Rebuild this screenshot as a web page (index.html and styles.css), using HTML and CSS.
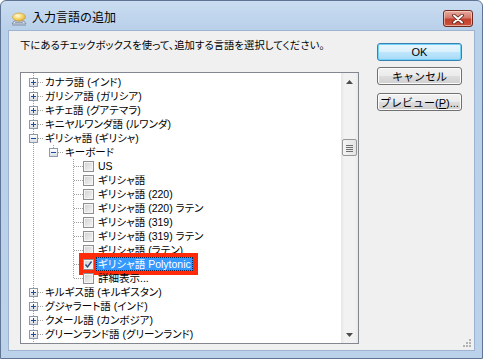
FILE: index.html
```html
<!DOCTYPE html>
<html lang="ja">
<head>
    <meta charset="UTF-8">
    <title>入力言語の追加</title>
    <link rel="stylesheet" href="styles.css">
</head>
<body>

    <!-- Dialog window -->
    <div class="window">

        <!-- Title bar -->
        <div class="titlebar">
            <svg class="app-icon" width="16" height="16" viewBox="0 0 16 16">
                <defs>
                    <radialGradient id="cloud" cx="0.4" cy="0.35" r="0.7">
                        <stop offset="0" stop-color="#fffbe0"/>
                        <stop offset="0.5" stop-color="#f7d873"/>
                        <stop offset="1" stop-color="#d9a936"/>
                    </radialGradient>
                </defs>
                <path d="M1 13 L3 10 L13 10 L15 13 Z" fill="#dfe6ef" stroke="#6b7f99" stroke-width="0.8"/>
                <path d="M4 11.5 H12" stroke="#8193ab" stroke-width="0.8"/>
                <rect x="1" y="13" width="14" height="2" fill="#9fb0c6"/>
                <ellipse cx="8" cy="6" rx="6.5" ry="4" fill="url(#cloud)" stroke="#c99a2e" stroke-width="0.6"/>
            </svg>
            <span class="title">入力言語の追加</span>
            <button class="close" type="button" aria-label="閉じる">
                <svg width="14" height="10" viewBox="0 0 14 10">
                    <path d="M3 1.5 L11 8.5 M11 1.5 L3 8.5" stroke="#5a1f18" stroke-width="3.6" stroke-linecap="round"/>
                    <path d="M3 1.5 L11 8.5 M11 1.5 L3 8.5" stroke="#fff" stroke-width="2" stroke-linecap="round"/>
                </svg>
            </button>
        </div>

        <!-- Client area -->
        <div class="client">
            <div class="main">
                <p class="hint">下にあるチェックボックスを使って、追加する言語を選択してください。</p>

                <div class="listbox">
                    <div class="tree">
                        <div class="row"><span class="cell h"><span class="box plus"></span></span><span class="label">カナラ語 (インド)</span></div>
                        <div class="row"><span class="cell h"><span class="box plus"></span></span><span class="label">ガリシア語 (ガリシア)</span></div>
                        <div class="row"><span class="cell h"><span class="box plus"></span></span><span class="label">キチェ語 (グアテマラ)</span></div>
                        <div class="row"><span class="cell h"><span class="box plus"></span></span><span class="label">キニヤルワンダ語 (ルワンダ)</span></div>
                        <div class="row"><span class="cell h"><span class="box minus"></span></span><span class="label">ギリシャ語 (ギリシャ)</span></div>
                        <div class="row"><span class="cell"></span><span class="cell h v-half"><span class="box minus"></span></span><span class="label">キーボード</span></div>
                        <div class="row"><span class="cell"></span><span class="cell"></span><span class="cell h v-full"></span><span class="check"></span><span class="label">US</span></div>
                        <div class="row"><span class="cell"></span><span class="cell"></span><span class="cell h v-full"></span><span class="check"></span><span class="label">ギリシャ語</span></div>
                        <div class="row"><span class="cell"></span><span class="cell"></span><span class="cell h v-full"></span><span class="check"></span><span class="label">ギリシャ語 (220)</span></div>
                        <div class="row"><span class="cell"></span><span class="cell"></span><span class="cell h v-full"></span><span class="check"></span><span class="label">ギリシャ語 (220) ラテン</span></div>
                        <div class="row"><span class="cell"></span><span class="cell"></span><span class="cell h v-full"></span><span class="check"></span><span class="label">ギリシャ語 (319)</span></div>
                        <div class="row"><span class="cell"></span><span class="cell"></span><span class="cell h v-full"></span><span class="check"></span><span class="label">ギリシャ語 (319) ラテン</span></div>
                        <div class="row"><span class="cell"></span><span class="cell"></span><span class="cell h v-full"></span><span class="check"></span><span class="label">ギリシャ語 (ラテン)</span></div>
                        <div class="row">
                            <span class="cell"></span><span class="cell"></span><span class="cell h v-full"></span>
                            <span class="marked">
                                <span class="check checked">
                                    <svg width="9" height="9" viewBox="0 0 9 9"><path d="M1.5 4.5 L3.5 7 L7.5 1.5" fill="none" stroke="#2b4476" stroke-width="1.3"/></svg>
                                </span>
                                <span class="label selected">ギリシャ語 Polytonic</span>
                            </span>
                        </div>
                        <div class="row"><span class="cell"></span><span class="cell"></span><span class="cell h v-half"></span><span class="check"></span><span class="label">詳細表示...</span></div>
                        <div class="row"><span class="cell h"><span class="box plus"></span></span><span class="label">キルギス語 (キルギスタン)</span></div>
                        <div class="row"><span class="cell h"><span class="box plus"></span></span><span class="label">グジャラート語 (インド)</span></div>
                        <div class="row"><span class="cell h"><span class="box plus"></span></span><span class="label">クメール語 (カンボジア)</span></div>
                        <div class="row"><span class="cell h"><span class="box plus"></span></span><span class="label">グリーンランド語 (グリーンランド)</span></div>
                        <div class="row"><span class="cell h"><span class="box plus"></span></span><span class="label">クロアチア語 (クロアチア)</span></div>
                    </div>

                    <!-- Vertical scrollbar -->
                    <div class="scrollbar">
                        <div class="arrow">
                            <svg width="7" height="4" viewBox="0 0 7 4"><path d="M0 4 L3.5 0 L7 4 Z" fill="#4d4d4d"/></svg>
                        </div>
                        <div class="track">
                            <div class="thumb">
                                <svg width="7" height="8" viewBox="0 0 7 8">
                                    <path d="M0 1.5 H7 M0 3.5 H7 M0 5.5 H7 M0 7.5 H7" stroke="#6e6e6e" stroke-width="1"/>
                                </svg>
                            </div>
                        </div>
                        <div class="arrow">
                            <svg width="7" height="4" viewBox="0 0 7 4"><path d="M0 0 L7 0 L3.5 4 Z" fill="#4d4d4d"/></svg>
                        </div>
                    </div>
                </div>
            </div>

            <!-- Dialog buttons -->
            <div class="buttons">
                <button class="btn default" type="button">OK</button>
                <button class="btn" type="button">キャンセル</button>
                <button class="btn preview" type="button">プレビュー(<u>P</u>)...</button>
            </div>

            <svg class="grip" width="8" height="8" viewBox="0 0 8 8">
                <rect x="6" y="0" width="2" height="2" fill="#b3b3b3"/>
                <rect x="3" y="3" width="2" height="2" fill="#b3b3b3"/>
                <rect x="6" y="3" width="2" height="2" fill="#b3b3b3"/>
                <rect x="0" y="6" width="2" height="2" fill="#b3b3b3"/>
                <rect x="3" y="6" width="2" height="2" fill="#b3b3b3"/>
                <rect x="6" y="6" width="2" height="2" fill="#b3b3b3"/>
            </svg>
        </div>

    </div>

</body>
</html>
```

FILE: styles.css
```css
/* General styling */
* {
    margin: 0;
    padding: 0;
    box-sizing: border-box;
}

body {
    font-family: "Liberation Sans", "Noto Sans CJK JP", sans-serif;
    font-size: 10.5px;
    color: #000;
    background: #fff;
}

/* Window frame */
.window {
    width: 483px;
    height: 359px;
    display: flex;
    flex-direction: column;
    border: 1px solid #5f7593;
    border-radius: 6px 6px 0 0;
    background: linear-gradient(to bottom, #c9dcf1 0, #b9d0ea 30px, #bcd2eb 100%);
}

/* Title bar */
.titlebar {
    height: 29px;
    display: flex;
    align-items: flex-start;
    padding-left: 10px;
}

.app-icon {
    margin-top: 10px;
}

.title {
    font-family: "Noto Sans CJK JP", sans-serif;
    font-size: 12px;
    line-height: 14px;
    margin: 9px 0 0 5px;
    flex: 1;
}

.close {
    width: 30px;
    height: 17px;
    margin: 9px 9px 0 0;
    border: 1px solid #6d2b22;
    border-radius: 3px;
    background: linear-gradient(to bottom, #e9aa9e 0, #d47a6c 45%, #c4402c 55%, #c8543f 100%);
    box-shadow: inset 0 0 0 1px rgba(255, 220, 210, 0.6);
    display: flex;
    align-items: center;
    justify-content: center;
}

/* Client area */
.client {
    position: relative;
    flex: 1;
    margin: 0 7px 7px 7px;
    background-color: #f0f0f0;
    border: 1px solid #9db3cf;
    display: flex;
    padding: 8px 0 0 11px;
}

.main {
    width: 339px;
}

.hint {
    font-size: 10.3px;
    font-feature-settings: "palt";
    line-height: 13px;
    height: 13px;
    margin-bottom: 20px;
    letter-spacing: 0.1px;
}

/* List box */
.listbox {
    height: 272px;
    border: 1px solid #828790;
    background-color: #fff;
    display: flex;
    overflow: hidden;
}

.tree {
    flex: 1;
    padding-top: 2px;
    overflow: hidden;
    background-image: repeating-linear-gradient(to bottom, #a0a0a0 0 1px, transparent 1px 2px);
    background-size: 1px 100%;
    background-position: 12px 0;
    background-repeat: no-repeat;
}

.row {
    height: 14px;
    display: flex;
    align-items: center;
    padding-left: 2px;
    white-space: nowrap;
    font-feature-settings: "palt";
}

.cell {
    width: 20px;
    height: 14px;
    flex-shrink: 0;
    display: flex;
    align-items: center;
    background-repeat: no-repeat;
}

.cell.h {
    background-image: repeating-linear-gradient(to right, #a0a0a0 0 1px, transparent 1px 2px);
    background-size: 9px 1px;
    background-position: 11px 7px;
}

.cell.h.v-full {
    background-image:
        repeating-linear-gradient(to right, #a0a0a0 0 1px, transparent 1px 2px),
        repeating-linear-gradient(to bottom, #a0a0a0 0 1px, transparent 1px 2px);
    background-size: 9px 1px, 1px 14px;
    background-position: 11px 7px, 10px 0;
}

.cell.h.v-half {
    background-image:
        repeating-linear-gradient(to right, #a0a0a0 0 1px, transparent 1px 2px),
        repeating-linear-gradient(to bottom, #a0a0a0 0 1px, transparent 1px 2px);
    background-size: 9px 1px, 1px 7px;
    background-position: 11px 7px, 10px 0;
}

/* Expand / collapse boxes */
.box {
    width: 9px;
    height: 9px;
    margin-left: 6px;
    border: 1px solid #8e9aa8;
    background-repeat: no-repeat;
}

.box.plus {
    background-image:
        linear-gradient(#1c4e9c, #1c4e9c),
        linear-gradient(#1c4e9c, #1c4e9c),
        linear-gradient(to bottom, #ffffff, #d9dee6);
    background-size: 5px 1px, 1px 5px, 100% 100%;
    background-position: center, center, 0 0;
}

.box.minus {
    background-image:
        linear-gradient(#1c4e9c, #1c4e9c),
        linear-gradient(to bottom, #ffffff, #d9dee6);
    background-size: 5px 1px, 100% 100%;
    background-position: center, 0 0;
}

/* Check boxes */
.check {
    width: 11px;
    height: 11px;
    flex-shrink: 0;
    border: 1px solid #8f8f8f;
    background: linear-gradient(135deg, #cfcfcf, #f7f7f7);
    box-shadow: inset 0 0 0 1px #f4f4f4;
    display: flex;
    align-items: center;
    justify-content: center;
}

.label {
    padding: 0 2px;
    line-height: 14px;
}

.check + .label {
    margin-left: 2px;
}

.selected {
    background-color: #3399ff;
    color: #fff;
    outline: 1px dotted #0a2a5a;
    outline-offset: -1px;
}

/* Red annotation frame */
.marked {
    display: flex;
    align-items: center;
    height: 14px;
    background-color: #ff2a0a;
    box-shadow: 0 0 0 4px #ff2a0a;
    padding-right: 1px;
}

.marked .label {
    margin-left: 2px;
}

/* Scrollbar */
.scrollbar {
    width: 17px;
    display: flex;
    flex-direction: column;
    background: linear-gradient(to right, #e6e6e6, #f2f2f2 20%, #f2f2f2 80%, #e9e9e9);
}

.arrow {
    height: 17px;
    display: flex;
    align-items: center;
    justify-content: center;
}

.track {
    flex: 1;
}

.thumb {
    width: 15px;
    height: 17px;
    margin: 49px 0 0 1px;
    border: 1px solid #979797;
    border-radius: 2px;
    background: linear-gradient(to right, #f4f4f4, #e4e4e4);
    display: flex;
    align-items: center;
    justify-content: center;
}

/* Buttons column */
.buttons {
    width: 85px;
    margin-left: 18px;
    padding-top: 4px;
    display: flex;
    flex-direction: column;
}

.btn {
    height: 18px;
    border: 1px solid #707070;
    border-radius: 3px;
    font-family: "Liberation Sans", "Noto Sans CJK JP", sans-serif;
    font-size: 11px;
    color: #000;
    background: linear-gradient(to bottom, #f2f2f2 0, #ebebeb 48%, #dddddd 52%, #cfcfcf 100%);
    box-shadow: inset 0 0 0 1px #fcfcfc;
    margin-bottom: 6px;
}

.btn.default {
    border-color: #3c7fb1;
    background: linear-gradient(to bottom, #eaf6fd 0, #d9f0fc 48%, #bee6fd 52%, #a7d9f5 100%);
    box-shadow: inset 0 0 0 1px #6fd3f8;
}

.btn.preview {
    margin-top: 2px;
}

.btn u {
    text-decoration: underline;
}

.grip {
    position: absolute;
    right: 3px;
    bottom: 3px;
}
```
